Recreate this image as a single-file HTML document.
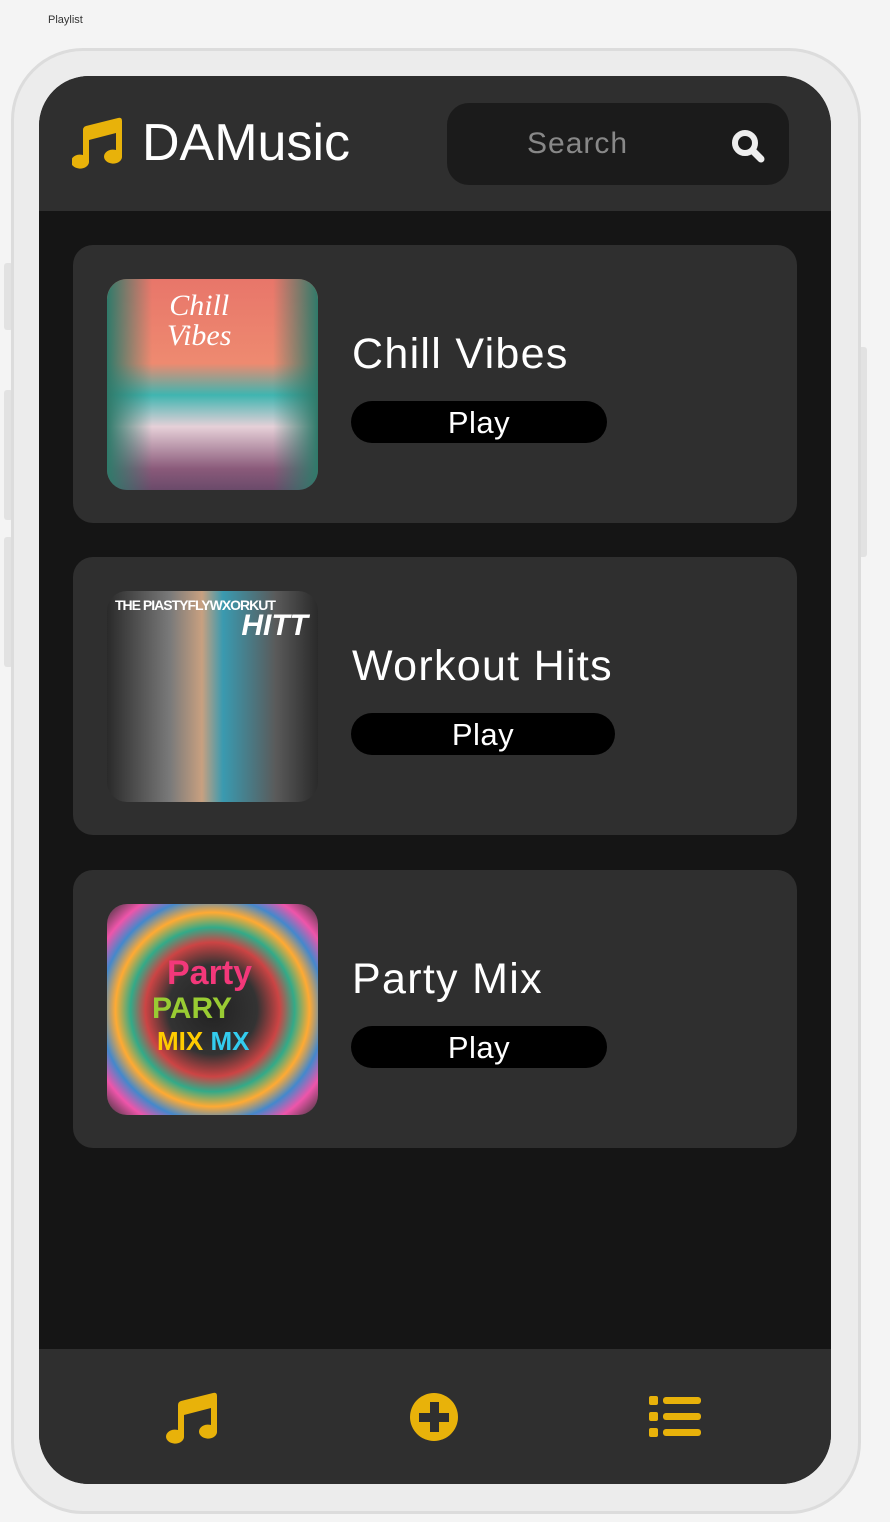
<!DOCTYPE html>
<html><head><meta charset="utf-8"><style>
*{margin:0;padding:0;box-sizing:border-box}
body{width:890px;height:1522px;background:#f4f4f4;font-family:"Liberation Sans",sans-serif;position:relative;overflow:hidden}
.lbl{position:absolute;left:48px;top:14px;font-size:11px;color:#333}
.btnside{position:absolute;background:#e2e2e2;border-radius:3px}
.phone{position:absolute;left:11px;top:48px;width:850px;height:1466px;border:3px solid #dcdcdc;background:#ececec;border-radius:72px}
.screen{position:absolute;left:39px;top:76px;width:792px;height:1408px;background:#151515;border-radius:50px;overflow:hidden}
.hdr{position:absolute;left:0;top:0;width:792px;height:135px;background:#2f2f2f}
.logo{position:absolute;left:103px;top:37px;font-size:52px;color:#fff;letter-spacing:0px}
.search{position:absolute;left:408px;top:27px;width:342px;height:82px;background:#1b1b1b;border-radius:22px}
.search span{position:absolute;left:80px;top:24px;font-size:30px;color:#888;letter-spacing:1px}
.card{position:absolute;left:34px;width:724px;height:278px;background:#2f2f2f;border-radius:20px}
.img{position:absolute;left:34px;top:34px;width:211px;height:211px;border-radius:20px;overflow:hidden}
.title{position:absolute;left:279px;top:85px;font-size:43px;color:#fff;letter-spacing:1.3px}
.play{position:absolute;left:278px;top:156px;height:42px;background:#000;border-radius:21px;color:#fff;font-size:31px;text-align:center;line-height:44px;letter-spacing:0.5px}
.nav{position:absolute;left:0;top:1273px;width:792px;height:135px;background:#2f2f2f}
</style></head><body>
<div class="lbl">Playlist</div>
<div class="btnside" style="left:4px;top:263px;width:9px;height:67px"></div>
<div class="btnside" style="left:4px;top:390px;width:9px;height:130px"></div>
<div class="btnside" style="left:4px;top:537px;width:9px;height:130px"></div>
<div class="btnside" style="left:858px;top:347px;width:9px;height:210px"></div>
<div class="phone"></div>
<div class="screen">
 <div class="hdr">
  <svg style="position:absolute;left:33px;top:41px" width="52" height="54" viewBox="0 0 52 54"><path fill="#e8b20a" d="M50 4 Q50 0 46 1 L14 9 Q11 10 11 13 L11 38 A9 7 0 1 0 17 44 L17 23 L44 16 L44 33 A9 7 0 1 0 50 39 Z"/></svg>
  <div class="logo">DAMusic</div>
  <div class="search"><span>Search</span>
   <svg style="position:absolute;left:284px;top:26px" width="34" height="34" viewBox="0 0 34 34"><circle cx="14" cy="14" r="10" fill="none" stroke="#eee" stroke-width="6"/><line x1="22" y1="22" x2="30" y2="30" stroke="#eee" stroke-width="7" stroke-linecap="round"/></svg>
  </div>
 </div>
 <div class="card" style="top:169px">
  <div class="img" style="background:linear-gradient(180deg,#e8766a 0%,#ee8a70 40%,#3fb5b0 55%,#e6d0d8 70%,#8a5a7a 90%,#6a4a6a 100%)">
   <div style="position:absolute;left:60px;top:12px;font-family:'Liberation Serif',serif;font-style:italic;color:#fff;font-size:30px;line-height:30px;text-align:center">Chill<br>Vibes</div>
   <div style="position:absolute;left:0;top:0;width:45px;height:211px;background:linear-gradient(90deg,#2f7a6a,transparent)"></div>
   <div style="position:absolute;right:0;top:0;width:45px;height:211px;background:linear-gradient(270deg,#2f7a6a,transparent)"></div>
  </div>
  <div class="title">Chill Vibes</div>
  <div class="play" style="width:256px">Play</div>
 </div>
 <div class="card" style="top:481px">
  <div class="img" style="background:linear-gradient(90deg,#2a2a2a 0%,#7a7a7a 30%,#c8a080 45%,#3a9ab0 55%,#5a5a5a 80%,#2a2a2a 100%)">
   <div style="position:absolute;left:8px;top:6px;color:#fff;font-weight:bold;font-size:14px;letter-spacing:-1px">THE PIASTYFLYWXORKUT</div>
   <div style="position:absolute;right:10px;top:18px;color:#fff;font-weight:bold;font-style:italic;font-size:30px">HITT</div>
  </div>
  <div class="title">Workout Hits</div>
  <div class="play" style="width:264px">Play</div>
 </div>
 <div class="card" style="top:794px">
  <div class="img" style="background:radial-gradient(circle,#222 0%,#333 30%,#c44 45%,#3a8 55%,#fa3 65%,#48c 75%,#e5a 85%,#333 100%)">
   <div style="position:absolute;left:60px;top:50px;color:#f3387a;font-weight:bold;font-size:34px">Party</div>
   <div style="position:absolute;left:45px;top:88px;color:#9c3;font-weight:bold;font-size:30px">PARY</div>
   <div style="position:absolute;left:50px;top:122px;color:#fc0;font-weight:bold;font-size:26px">MIX <span style="color:#3ce">MX</span></div>
  </div>
  <div class="title">Party Mix</div>
  <div class="play" style="width:256px">Play</div>
 </div>
 <div class="nav">
  <svg style="position:absolute;left:127px;top:43px" width="54" height="54" viewBox="0 0 52 54"><path fill="#e8b20a" d="M50 4 Q50 0 46 1 L14 9 Q11 10 11 13 L11 38 A9 7 0 1 0 17 44 L17 23 L44 16 L44 33 A9 7 0 1 0 50 39 Z"/></svg>
  <svg style="position:absolute;left:370px;top:43px" width="50" height="50" viewBox="0 0 50 50"><circle cx="25" cy="25" r="24" fill="#e8b20a"/><rect x="21" y="10" width="9" height="30" fill="#2f2f2f"/><rect x="10" y="21" width="30" height="9" fill="#2f2f2f"/></svg>
  <svg style="position:absolute;left:610px;top:47px" width="52" height="44" viewBox="0 0 52 44"><g fill="#e8b20a"><rect x="0" y="0" width="9" height="9" rx="2"/><rect x="0" y="16" width="9" height="9" rx="2"/><rect x="0" y="32" width="9" height="9" rx="2"/><rect x="14" y="1" width="38" height="7" rx="3"/><rect x="14" y="17" width="38" height="7" rx="3"/><rect x="14" y="33" width="38" height="7" rx="3"/></g></svg>
 </div>
</div>
</body></html>
